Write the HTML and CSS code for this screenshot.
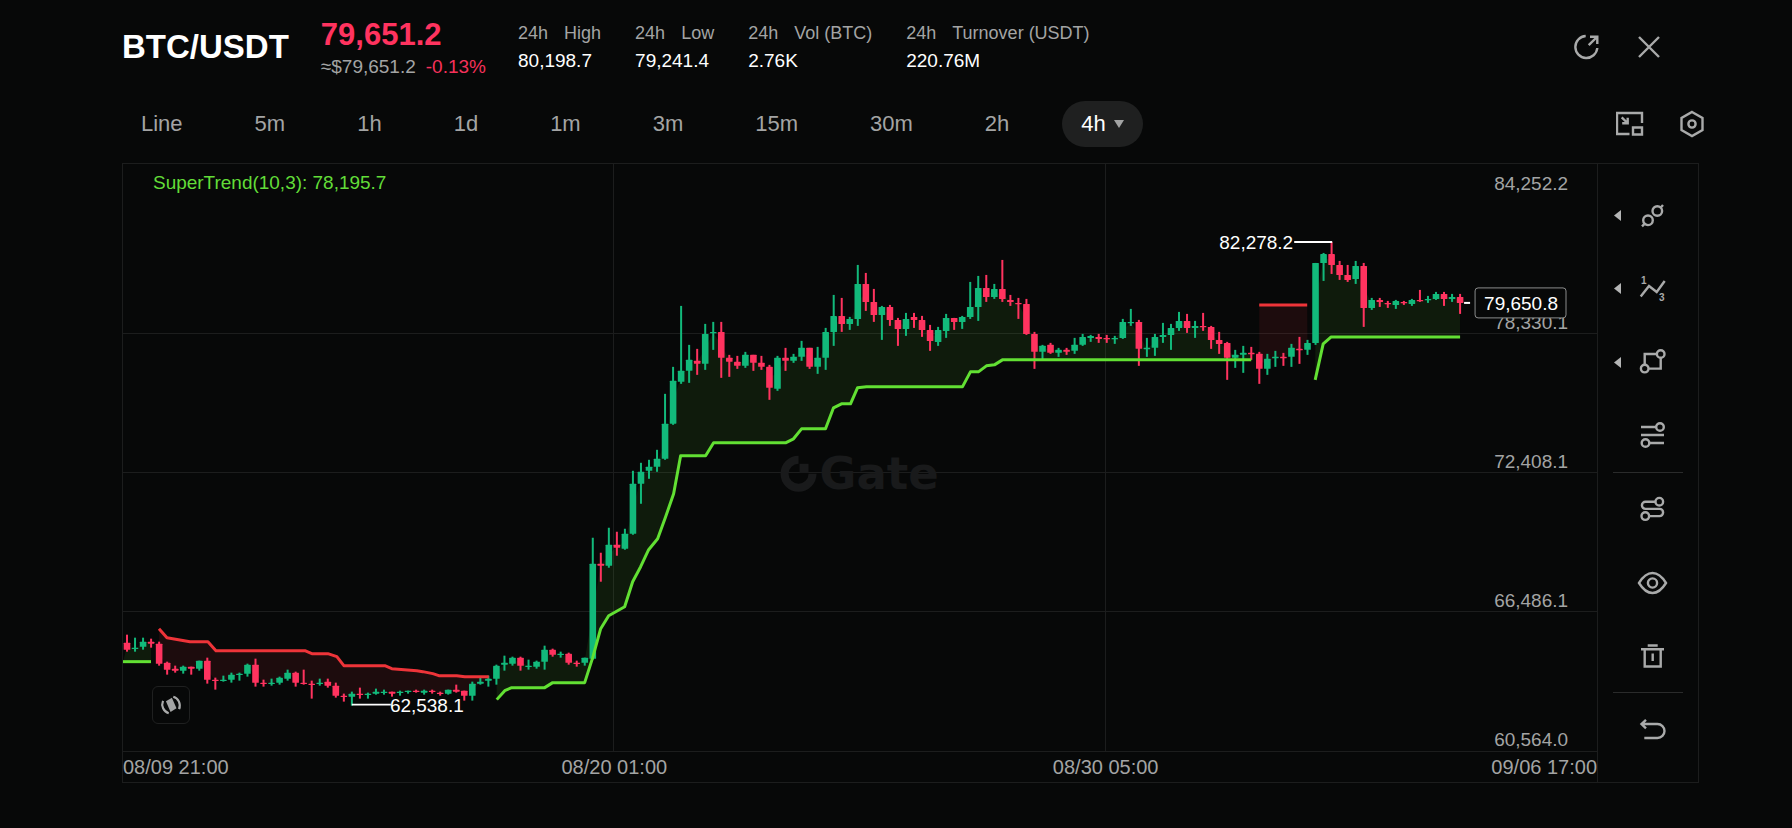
FILE: index.html
```html
<!DOCTYPE html>
<html lang="en">
	<head>
		<meta charset="utf-8">
		<title>BTC/USDT</title>
		<link rel="stylesheet" href="styles.css">
	</head>
	<body>
		<div class="page">
			<header class="header">
				<h1 class="pair">BTC/USDT</h1>
				<div class="price">
					<div class="last">79,651.2</div>
					<div class="sub"><span>≈$79,651.2</span><span class="down">-0.13%</span></div>
				</div>
				<dl class="stats">
					<div><dt><span>24h</span><span>High</span></dt><dd>80,198.7</dd></div>
					<div><dt><span>24h</span><span>Low</span></dt><dd>79,241.4</dd></div>
					<div><dt><span>24h</span><span>Vol (BTC)</span></dt><dd>2.76K</dd></div>
					<div><dt><span>24h</span><span>Turnover (USDT)</span></dt><dd>220.76M</dd></div>
				</dl>
				<div class="actions">
					<button class="icon" aria-label="Share"><svg viewBox="0 0 28 28"><path d="M12.7 3A11 11 0 1 0 24.3 15M15.7 12.2L24 4M17 3.8H24.3V11"/></svg></button>
					<button class="icon" aria-label="Close"><svg viewBox="0 0 28 28"><path d="M4 4L24 24M24 4L4 24"/></svg></button>
				</div>
			</header>

			<nav class="toolbar">
				<div class="tabs">
					<button class="tab">Line</button>
					<button class="tab">5m</button>
					<button class="tab">1h</button>
					<button class="tab">1d</button>
					<button class="tab">1m</button>
					<button class="tab">3m</button>
					<button class="tab">15m</button>
					<button class="tab">30m</button>
					<button class="tab">2h</button>
					<button class="tab active" aria-haspopup="true">4h<svg class="caret" viewBox="0 0 10 8"><path d="M0 0H10L5 8Z"/></svg></button>
				</div>
				<div class="tools">
					<button class="icon" aria-label="Picture in picture"><svg viewBox="0 0 28 28"><path d="M26 13V3H1V24H13.5M17 17.5H26V24.5H17ZM5.7 7.3L11.5 13M11.7 7.8V13.3H6.2"/></svg></button>
					<button class="icon" aria-label="Settings"><svg viewBox="0 0 28 28"><path d="M14 2L24.5 8V20L14 26L3.5 20V8Z"/><circle cx="14" cy="14" r="3.6"/></svg></button>
				</div>
			</nav>

			<main class="panel">
				<div class="chart">
					<div class="plot">
						<svg id="candles" viewBox="123 163 1475 587" role="img" aria-label="BTC/USDT 4h candles">
							<path class="grid" d="M123 333H1598M123 472H1598M123 611H1598M614 163V750M1106 163V750"/>
							<g class="mark">
								<path class="ring" d="M799 459A14 14 0 1 0 813 473"/>
								<path class="dot" d="M800 463H809V472H800Z"/>
								<text x="820" y="488">Gate</text>
							</g>
							<g id="fills"></g>
							<g id="bars"></g>
							<g id="trends"></g>
							<g class="scale">
								<text x="1569" y="189">84,252.2</text>
								<text x="1569" y="328">78,330.1</text>
								<text x="1569" y="467">72,408.1</text>
								<text x="1569" y="606">66,486.1</text>
								<text x="1569" y="745">60,564.0</text>
							</g>
							<path class="lead" d="M1465 302H1471"/>
							<rect class="tag" x="1476" y="287" width="91" height="30" rx="3"/>
							<text class="now" x="1522" y="309">79,650.8</text>
							<path class="lead" d="M1295 241H1333M352 704H391"/>
							<text class="now" x="1257" y="248">82,278.2</text>
							<text class="now" x="427" y="711">62,538.1</text>
							<text class="legend" x="153" y="188">SuperTrend(10,3): 78,195.7</text>
						</svg>
						<button class="rotate" aria-label="Rotate"><svg viewBox="0 0 24 24"><path class="solid" d="M6.5 8L13 4L18 15.5L11.5 19.5Z"/><path d="M3.3 7.5A10 10 0 0 0 9.5 21M14.5 3A10 10 0 0 1 20.8 16.5"/></svg></button>
					</div>
					<div class="dates">
						<span>08/09 21:00</span>
						<span>08/20 01:00</span>
						<span>08/30 05:00</span>
						<span>09/06 17:00</span>
					</div>
				</div>
				<ul class="rail">
					<li><button aria-label="Lines"><svg class="arrow" viewBox="0 0 7 11"><path d="M7 0V11L0 5.5Z"/></svg><svg class="glyph" viewBox="0 0 28 28"><circle cx="19.3" cy="9" r="4.8"/><circle cx="10" cy="18.3" r="4.8"/><path d="M22.8 5.5L25 3M6.5 21.8L4 24.3"/></svg></button></li>
					<li><button aria-label="Waves"><svg class="arrow" viewBox="0 0 7 11"><path d="M7 0V11L0 5.5Z"/></svg><svg class="glyph" viewBox="0 0 28 28"><path d="M2.7 21.5L11 11L18.7 17L26.7 6"/><text x="3" y="9">1</text><text x="21" y="26">3</text></svg></button></li>
					<li><button aria-label="Shapes"><svg class="arrow" viewBox="0 0 7 11"><path d="M7 0V11L0 5.5Z"/></svg><svg class="glyph" viewBox="0 0 28 28"><path d="M6.7 16.6V6H18.7M22.7 10V20.6H10.7"/><circle cx="22.7" cy="6" r="3.8"/><circle cx="6.7" cy="20.6" r="3.8"/></svg></button></li>
					<li><button aria-label="Fibonacci"><svg class="glyph" viewBox="0 0 28 28"><path d="M3 6H18M3 14H26M11.5 22H26"/><circle cx="22" cy="6" r="3.8"/><circle cx="7.5" cy="22" r="3.8"/></svg></button></li>
					<li class="split"><button aria-label="Continuous drawing"><svg class="glyph" viewBox="0 0 28 28"><path d="M17.5 6.7H7.5A3.6 3.6 0 0 0 7.5 13.9H21.5A3.6 3.6 0 0 1 21.5 21.1H11.3"/><circle cx="21.3" cy="6.7" r="3.8"/><circle cx="7.3" cy="21.1" r="3.8"/></svg></button></li>
					<li><button aria-label="Show drawings"><svg class="glyph" viewBox="0 0 28 28"><path d="M1 14C5 7.5 9 4 14.5 4S24 7.5 28 14C24 20.5 20 24 14.5 24S5 20.5 1 14Z"/><circle cx="14.5" cy="14" r="4.6"/></svg></button></li>
					<li><button aria-label="Delete drawings"><svg class="glyph" viewBox="0 0 28 28"><path d="M9.7 3.5H19.7M3 7.3H26M6.7 7.3V24.5H22.7V7.3M14.7 11.5V19"/></svg></button></li>
					<li class="split"><button aria-label="Undo"><svg class="glyph" viewBox="0 0 28 28"><path d="M8 3.8L3.5 8L8 12.3M3.5 8H19.5A7 7 0 0 1 19.5 22H6.3"/></svg></button></li>
				</ul>
			</main>
		</div>
		<script src="chart.js"></script>
	</body>
</html>
```
FILE: styles.css
```css
* { box-sizing: border-box; }
body {
	margin: 0;
	background: #070808;
	color: #a3a4a4;
	font-family: "Liberation Sans", Arial, sans-serif;
	font-size: 19px;
}
button {
	padding: 0;
	border: 0;
	background: none;
	color: inherit;
	font: inherit;
	cursor: pointer;
}
h1, dl, dd, ul { margin: 0; padding: 0; }
svg { display: block; }

.page { padding: 19px 86px 0 122px; }

/* header */
.header {
	display: flex;
	gap: 32px;
	padding-right: 43px;
	height: 82px;
	white-space: nowrap;
}
.pair {
	color: #fff;
	font-size: 33px;
	line-height: 56px;
}
.last {
	color: #ff335f;
	font-size: 31px;
	font-weight: bold;
	line-height: 32px;
}
.sub {
	display: flex;
	gap: 10px;
	line-height: 32px;
}
.down { color: #f5315a; }
.stats {
	display: flex;
	gap: 34px;
	line-height: 28px;
}
.stats dt {
	display: flex;
	gap: 16px;
	font-size: 18px;
}
.stats dd { color: #fff; }
.actions, .tools {
	display: flex;
	align-items: center;
	gap: 34px;
	margin-left: auto;
}
.actions { height: 56px; }
.icon svg {
	width: 28px;
	height: 28px;
}
.icon svg, .glyph, .rotate svg {
	fill: none;
	stroke: #a9aaaa;
	stroke-width: 2.4;
}

/* intervals */
.toolbar {
	display: flex;
	height: 46px;
	margin-bottom: 16px;
}
.tabs {
	display: flex;
	gap: 34px;
}
.tab {
	display: flex;
	align-items: center;
	gap: 8px;
	padding: 0 19px;
	border-radius: 23px;
	font-size: 22px;
}
.active {
	background: #1f2020;
	color: #fff;
}
.caret {
	width: 10px;
	height: 8px;
	fill: #a3a4a4;
}

/* chart */
.panel {
	display: flex;
	margin-right: 7px;
	border: 1px solid #1c1d1d;
}
.chart {
	flex: 1;
	min-width: 0;
}
.plot { position: relative; }
#candles {
	width: 100%;
	height: auto;
}
.grid {
	stroke: #1c1d1d;
	shape-rendering: crispEdges;
}
.mark text {
	fill: #191a1b;
	font: bold 45px "DejaVu Sans", sans-serif;
}
.ring {
	fill: none;
	stroke: #191a1b;
	stroke-width: 8;
}
.dot { fill: #191a1b; }
.scale text {
	fill: #a3a4a4;
	text-anchor: end;
}
.tag {
	fill: #070808;
	stroke: #8c8d8d;
}
.now {
	fill: #fff;
	text-anchor: middle;
}
.lead {
	stroke: #fff;
	stroke-width: 2;
}
.legend { fill: #62dd38; }
.bar-up { fill: #12b97b; }
.bar-down { fill: #ff335f; }
.trend-up, .trend-down {
	fill: none;
	stroke: #62e033;
	stroke-width: 3;
	stroke-linejoin: round;
}
.trend-down { stroke: #ee3439; }
.fill-up { fill: #62dd38; opacity: .09; }
.fill-down { fill: #ff3344; opacity: .09; }
.rotate {
	position: absolute;
	left: 2%;
	bottom: 27px;
	display: grid;
	place-items: center;
	width: 38px;
	height: 38px;
	border: 1px solid #1f2020;
	border-radius: 6px;
	background: #070808;
}
.rotate svg {
	width: 22px;
	height: 22px;
}
.rotate .solid {
	fill: #a3a4a4;
	stroke: none;
}
.dates {
	display: grid;
	grid-template-columns: 1fr 2fr 2fr 1fr;
	border-top: 1px solid #1c1d1d;
	font-size: 20px;
	line-height: 30px;
	text-align: center;
	white-space: nowrap;
}
.dates span:first-child { text-align: left; }
.dates span:last-child { justify-self: end; }

/* drawing tools */
.rail {
	display: flex;
	flex-direction: column;
	width: 101px;
	padding: 15px;
	border-left: 1px solid #1c1d1d;
	list-style: none;
}
.rail li { flex: 1; }
.rail button {
	display: flex;
	align-items: center;
	justify-content: flex-end;
	gap: 17px;
	width: 53px;
	height: 100%;
}
.split { border-top: 1px solid #2a2b2b; }
.arrow {
	width: 7px;
	height: 11px;
	fill: #b4b5b5;
}
.glyph {
	width: 28px;
	height: 28px;
	overflow: visible;
}
.glyph text {
	fill: #a9aaaa;
	stroke: none;
	font-size: 10px;
	font-weight: bold;
}
```
FILE: chart.js
```js
// one candle per entry: direction, high, body top, body bottom, low
var candles = (
	"d634,642,649,650 u637,647,648,650 u637,641,646,648 d638,641,643,646 d641,643,663,664 " +
	"d661,662,669,673 d665,668,670,671 u665,666,670,672 d666,666,668,673 u660,660,668,669 " +
	"d657,660,679,682 d677,679,680,688 u675,679,680,680 u672,674,679,681 u672,673,674,679 " +
	"u663,664,673,675 d658,664,682,685 d679,682,683,685 u678,682,683,684 u676,677,682,683 " +
	"u669,672,678,679 d671,672,682,685 d669,682,683,683 d680,683,684,697 u678,682,683,684 " +
	"d678,681,685,686 d682,685,695,696 d693,695,696,700 u691,693,696,704 d687,693,694,697 " +
	"u692,693,694,697 u688,691,693,693 u689,691,692,693 d691,691,693,695 u690,691,692,694 " +
	"u690,690,691,692 d689,690,691,691 u689,690,692,693 d689,690,691,692 d691,692,693,694 " +
	"u689,689,693,693 d684,689,691,691 d690,690,695,699 u681,683,695,699 u677,681,683,683 " +
	"u675,678,680,685 u664,665,678,683 u655,662,664,669 u656,657,663,664 d656,657,665,669 " +
	"u659,665,666,668 u660,661,666,667 u645,649,661,668 d648,649,654,655 u651,653,654,656 " +
	"d652,653,662,663 d660,662,663,665 u657,657,662,664 u537,563,658,658 d552,563,565,580 " +
	"u527,544,565,566 d531,544,547,554 u528,533,548,548 u470,483,533,533 u462,471,483,502 " +
	"u459,466,470,477 u449,458,466,470 u393,423,458,458 u366,380,423,423 u305,370,381,382 " +
	"u344,359,370,381 d348,360,363,373 u323,333,363,368 u321,331,332,348 d321,331,357,376 " +
	"d354,357,361,375 d355,361,365,367 u351,354,365,366 d354,354,362,369 d355,362,366,368 " +
	"d364,366,387,398 u355,357,388,389 d347,357,360,369 u353,356,360,361 u340,347,356,359 " +
	"d347,347,366,367 u346,357,366,372 u327,331,357,368 u294,315,331,344 d297,315,323,330 " +
	"u316,318,323,328 u264,283,318,324 d272,283,301,309 d288,301,314,320 u305,306,314,338 " +
	"d304,306,319,324 d317,319,328,344 u312,318,328,334 d312,316,319,326 d315,319,329,335 " +
	"d324,329,340,349 u326,329,341,344 u313,317,330,336 d317,317,321,328 u315,316,321,327 " +
	"u281,306,316,317 u275,287,306,319 d274,287,296,300 u283,288,296,297 d259,288,298,300 " +
	"d294,299,301,304 d297,302,303,317 d298,303,333,333 d331,333,351,367 u344,345,351,358 " +
	"d342,344,352,352 u347,349,352,355 d347,349,351,353 u337,344,350,352 u333,336,344,344 " +
	"u334,335,337,340 d333,336,338,341 d334,337,338,341 u335,337,338,342 u318,321,337,337 " +
	"u308,321,322,324 d319,321,348,364 u337,347,348,355 u333,336,347,354 u322,334,336,341 " +
	"u323,327,334,348 u311,320,327,329 d313,320,327,331 u320,325,327,336 d312,325,326,329 " +
	"d325,326,339,347 d331,339,343,352 d341,342,357,378 u349,354,357,366 u345,352,354,371 " +
	"d346,352,353,358 d351,353,368,382 u353,358,368,373 u350,356,357,365 d352,356,357,364 " +
	"u343,347,356,365 d336,348,349,362 u339,342,349,353 u262,262,342,343 u252,253,262,279 " +
	"d241,253,264,272 d260,264,274,278 d264,274,279,280 u260,265,278,282 d262,265,307,325 " +
	"u297,299,307,308 d297,299,301,305 d300,302,303,306 u299,300,304,307 d300,301,302,303 " +
	"u298,299,303,304 d289,299,300,300 u295,298,299,301 u291,293,298,298 d291,293,298,304 " +
	"u293,296,298,300 d293,296,302,312"
).split(" ");

// supertrend segments with the candles each one covers
var trends = [
	{dir: "up", from: 0, to: 3, points: "123,661 151,661"},
	{dir: "down", from: 4, to: 45, points: "159,628 167,637 190,641 208,641 216,650 305,650 312,653 328,653 337,656 344,665 385,665 392,668 417,670 423,671 433,673 439,675 457,675 465,676 489,676"},
	{dir: "up", from: 46, to: 140, points: "497,699 505,690 512,687 545,687 553,682 585,682 593,657 601,628 609,615 625,606 633,581 641,566 649,549 658,538 666,516 674,493 681,455 706,455 714,442 786,442 794,438 802,428 826,428 834,407 842,403 851,403 858,387 867,386 963,386 971,371 979,371 987,365 995,364 1003,359 1252,359"},
	{dir: "down", from: 141, to: 147, points: "1260,304 1308,304"},
	{dir: "up", from: 148, to: 166, points: "1316,379 1324,343 1332,336 1461,336"}
];

function add(parent, name, attrs) {
	var el = document.createElementNS("http://www.w3.org/2000/svg", name);
	for (var key in attrs)
		el.setAttribute(key, attrs[key]);
	document.getElementById(parent).appendChild(el);
}

function xOf(i) {
	return 127 + i * 1334 / 166;
}

var middles = [];
candles.forEach(function (text, i) {
	var v = text.slice(1).split(",").map(Number);
	var cls = text[0] == "u" ? "bar-up" : "bar-down";
	var x = xOf(i);
	middles.push((v[1] + v[2]) / 2);
	add("bars", "rect", {"class": cls, x: x - 1, y: v[0], width: 2, height: v[3] - v[0] + 1});
	add("bars", "rect", {"class": cls, x: x - 3.3, y: v[1], width: 6.6, height: Math.max(v[2] - v[1], 1.3), rx: 0.5});
});

trends.forEach(function (t) {
	var edge = "";
	for (var i = t.to; i >= t.from; i--)
		edge += " " + xOf(i) + "," + middles[i];
	add("fills", "polygon", {"class": "fill-" + t.dir, points: t.points + edge});
	add("trends", "polyline", {"class": "trend-" + t.dir, points: t.points});
});
```
